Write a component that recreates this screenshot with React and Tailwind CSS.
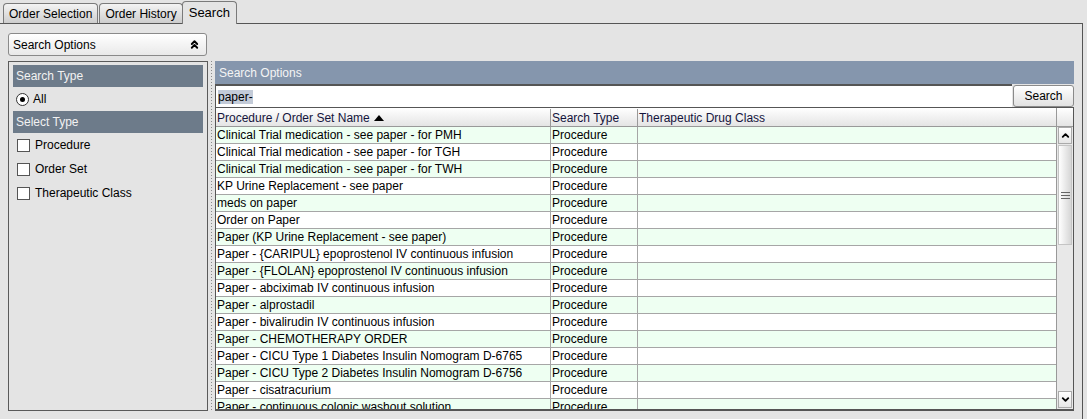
import { ChevronUp, ChevronDown, ChevronsUp } from 'lucide-react';

const rows = [
  'Clinical Trial medication - see paper - for PMH',
  'Clinical Trial medication - see paper - for TGH',
  'Clinical Trial medication - see paper - for TWH',
  'KP Urine Replacement - see paper',
  'meds on paper',
  'Order on Paper',
  'Paper (KP Urine Replacement - see paper)',
  'Paper - {CARIPUL} epoprostenol IV continuous infusion',
  'Paper - {FLOLAN} epoprostenol IV continuous infusion',
  'Paper - abciximab IV continuous infusion',
  'Paper - alprostadil',
  'Paper - bivalirudin IV continuous infusion',
  'Paper - CHEMOTHERAPY ORDER',
  'Paper - CICU Type 1 Diabetes Insulin Nomogram D-6765',
  'Paper - CICU Type 2 Diabetes Insulin Nomogram D-6756',
  'Paper - cisatracurium',
  'Paper - continuous colonic washout solution',
];

function Tab({ label, active }) {
  if (active) {
    return (
      <div className="h-[23px] px-[6px] -ml-[2px] flex items-center border border-b-0 border-[#7a7a7a] rounded-t-[4px] bg-[#e4e4e4] relative top-px text-[13px] text-black">
        {label}
      </div>
    );
  }
  return (
    <div className="h-[20px] px-[5px] flex items-center border border-b-0 border-[#7a7a7a] rounded-t-[4px] bg-gradient-to-b from-[#f4f4f4] to-[#cdcdcd] text-[12px] text-black">
      {label}
    </div>
  );
}

export default function App() {
  return (
    <div className="w-[1087px] h-[419px] bg-[#e4e4e4] overflow-hidden font-['Liberation_Sans',Arial,sans-serif] text-[12px] text-black">
      {/* tabs */}
      <div className="flex items-end h-[24px] pl-[3px] gap-px mr-[4px] border-b border-[#555]">
        <Tab label="Order Selection" />
        <Tab label="Order History" />
        <Tab label="Search" active />
      </div>

      <div className="h-[395px] mr-[4px] border-r border-[#555] pl-[8px] pr-[8px] pt-[9px] flex">
        {/* left column */}
        <div className="w-[200px] flex flex-col">
          <div className="h-[23px] w-[199px] flex items-center justify-between px-[4px] border border-[#8a8a8a] rounded-[3px] bg-gradient-to-b from-white to-[#e9e9e9] text-[12px]">
            <span>Search Options</span>
            <ChevronsUp size={13} strokeWidth={3.5} className="mr-[1px]" />
          </div>
          <div className="mt-[5px] h-[350px] border border-[#5a5a5a] p-[4px] pt-[3px] flex flex-col">
            <div className="h-[22px] shrink-0 bg-[#6d7b8a] text-[#f2f2f2] flex items-center pl-[3px]">Search Type</div>
            <div className="h-[24px] shrink-0 flex items-center pl-[3px] gap-[4px]">
              <span className="w-[13px] h-[13px] rounded-full border border-[#333] bg-white flex items-center justify-center">
                <span className="w-[5px] h-[5px] rounded-full bg-black" />
              </span>
              <span>All</span>
            </div>
            <div className="h-[22px] shrink-0 bg-[#6d7b8a] text-[#f2f2f2] flex items-center pl-[3px]">Select Type</div>
            {['Procedure', 'Order Set', 'Therapeutic Class'].map(t => (
              <div key={t} className="h-[24px] shrink-0 flex items-center pl-[4px] gap-[5px]">
                <span className="w-[13px] h-[13px] border border-[#555] bg-white" />
                <span>{t}</span>
              </div>
            ))}
          </div>
        </div>

        {/* splitter */}
        <div className="w-[7px] mt-[28px] h-[350px] flex justify-center">
          <div className="w-px h-full bg-[linear-gradient(#8a8a8a_1px,transparent_1px)] bg-[length:1px_3px]" />
        </div>

        {/* right column */}
        <div className="w-[859px] mt-[28px] h-[350px] flex flex-col">
          <div className="h-[23px] shrink-0 bg-[#8596ad] text-[#f4f4f4] flex items-center pl-[4px]">Search Options</div>
          <div className="h-[23px] shrink-0 flex">
            <div className="flex-1 bg-white border-t-2 border-l border-[#555] flex items-center pl-[2px]">
              <span className="bg-[#c3cbd8] text-black leading-[14px]">paper-</span>
            </div>
            <div className="w-[61px] ml-px mt-px h-[22px] border border-[#8a8a8a] rounded-[3px] bg-gradient-to-b from-white to-[#e2e2e2] flex items-center justify-center text-[12px]">
              Search
            </div>
          </div>

          {/* table */}
          <div className="flex-1 flex border-l border-t border-b-2 border-r border-[#555] overflow-hidden">
            <div className="flex-1 flex flex-col overflow-hidden">
              <div className="h-[19px] shrink-0 flex bg-gradient-to-b from-white to-[#e4e4e4] border-b border-[#999] text-[#14143c] pt-px">
                <div className="w-[335px] border-r border-[#999] pl-[1px] flex items-center gap-[4px]">
                  Procedure / Order Set Name
                  <svg width="10" height="6" viewBox="0 0 10 6"><path d="M0 6 L5 0 L10 6 Z" fill="#000" /></svg>
                </div>
                <div className="w-[87px] border-r border-[#999] pl-[1px] flex items-center">Search Type</div>
                <div className="flex-1 pl-[1px] flex items-center">Therapeutic Drug Class</div>
              </div>
              <div className="flex flex-col">
                {rows.map((r, i) => (
                  <div key={r} className={`h-[17px] shrink-0 flex border-b border-[#a6a6a6] ${i % 2 === 0 ? 'bg-[#eefff2]' : 'bg-white'}`}>
                    <div className="w-[335px] border-r border-[#a6a6a6] pl-[1px] leading-[17px] whitespace-nowrap overflow-hidden">{r}</div>
                    <div className="w-[87px] border-r border-[#a6a6a6] pl-[1px] leading-[17px]">Procedure</div>
                    <div className="flex-1" />
                  </div>
                ))}
              </div>
            </div>

            {/* scrollbar */}
            <div className="w-[17px] flex flex-col bg-[#e8e8e8] border-l border-[#999]">
              <div className="h-[19px] shrink-0 bg-gradient-to-b from-white to-[#e4e4e4] border-b border-[#999]" />
              <div className="h-[17px] shrink-0 mx-px border border-[#aaa] bg-gradient-to-b from-white to-[#e6e6e6] flex items-center justify-center">
                <ChevronUp size={11} strokeWidth={4} />
              </div>
              <div className="h-[100px] shrink-0 mx-px mt-px border border-[#c4c4c4] bg-gradient-to-r from-white to-[#d6d6d6] flex items-center justify-center">
                <svg width="9" height="7" viewBox="0 0 9 7"><path d="M0 0.5H9M0 3.5H9M0 6.5H9" stroke="#666" strokeWidth="1" /></svg>
              </div>
              <div className="flex-1" />
              <div className="h-[17px] shrink-0 mx-px mb-px border border-[#aaa] bg-gradient-to-b from-white to-[#e6e6e6] flex items-center justify-center">
                <ChevronDown size={11} strokeWidth={4} />
              </div>
            </div>
          </div>
        </div>
      </div>
    </div>
  );
}
